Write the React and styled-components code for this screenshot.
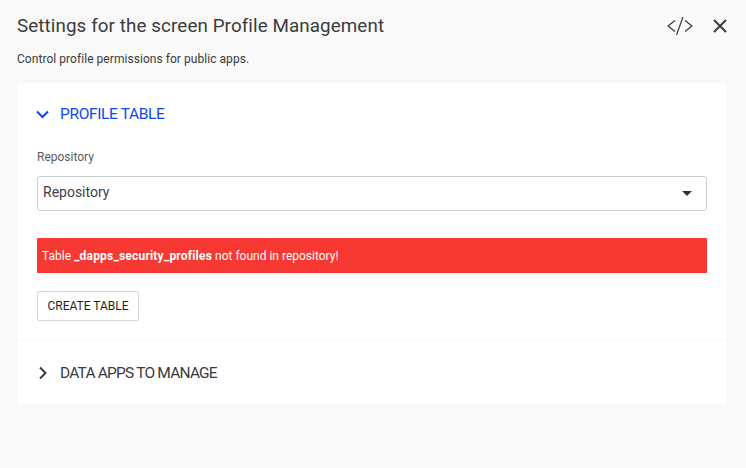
import React from 'react'
import styled, { createGlobalStyle } from 'styled-components'

const Global = createGlobalStyle`
  html, body { margin: 0; padding: 0; background: #f9f9f9; }
  body { font-family: Roboto, "Liberation Sans", sans-serif; }
`

const Page = styled.div`
  width: 746px;
  height: 468px;
  padding: 0 19px 0 17px;
  box-sizing: border-box;
  overflow: hidden;
  color: #3a3a3c;
`

const Header = styled.div`
  display: flex;
  align-items: center;
  justify-content: space-between;
  height: 52px;
`

const Title = styled.h1`
  margin: 0;
  font-size: 18.8px;
  font-weight: 400;
  letter-spacing: 0.1px;
  color: #3b3b3d;
`

const Actions = styled.div`
  display: flex;
  align-items: center;
  gap: 20px;
`

const Subtitle = styled.p`
  margin: 0 0 17px;
  height: 14px;
  line-height: 14px;
  font-size: 12px;
  letter-spacing: 0.05px;
  color: #3b3b3d;
`

const Card = styled.div`
  background: #fff;
  border-radius: 4px;
  box-shadow: 0 0 2px rgba(0, 0, 0, 0.04);
`

const Section = styled.section`
  border-bottom: ${({ $divider }) => ($divider ? '1px solid #f8f8f8' : 'none')};
  padding: ${({ $divider }) => ($divider ? '0 20px 19px 19px' : '0 20px 0 19px')};
`

const SectionHead = styled.div`
  display: flex;
  align-items: center;
  gap: 11px;
  height: ${({ $open }) => ($open ? '64px' : '63px')};
  padding-bottom: ${({ $open }) => ($open ? '2px' : '0')};
  box-sizing: border-box;
  color: ${({ $open }) => ($open ? '#0f47ef' : '#3b3b3d')};
  font-size: 15.5px;
  letter-spacing: ${({ $open }) => ($open ? '-0.35px' : '-0.8px')};
`

const Label = styled.div`
  font-size: 12px;
  line-height: 14px;
  color: #5c5c60;
  margin: 3px 0 12px 1px;
`

const Select = styled.div`
  display: flex;
  align-items: center;
  justify-content: space-between;
  height: 35px;
  box-sizing: border-box;
  padding: 0 14px 3px 5px;
  margin: 0 0 27px 1px;
  border: 1px solid #c6ced6;
  border-radius: 3px;
  font-size: 14px;
  color: #3f3f42;
`

const Caret = styled.span`
  width: 0;
  height: 0;
  margin-top: 3px;
  border-left: 5.5px solid transparent;
  border-right: 5.5px solid transparent;
  border-top: 5.5px solid #2f3237;
`

const Alert = styled.div`
  display: flex;
  align-items: center;
  gap: 3px;
  height: 35px;
  padding: 0 5px;
  margin: 0 0 18px 1px;
  background: #f73833;
  border-radius: 1px;
  color: #fff;
  font-size: 12px;
  b { font-weight: 700; letter-spacing: 0.2px; }
`

const Button = styled.button`
  display: block;
  height: 30px;
  width: 102px;
  margin-left: 1px;
  padding: 0;
  white-space: nowrap;
  background: #fff;
  border: 1px solid #d5d5d8;
  border-radius: 2px;
  font-family: inherit;
  font-size: 12px;
  color: #1f1f22;
`

const Glyph = styled.svg`
  display: block;
  flex: none;
`

const Chevron = ({ open }) => (
  <Glyph width="13" height="14" viewBox="0 0 13 14" fill="none" stroke="currentColor" strokeWidth="2">
    <path d={open ? 'M1 4.5 L6.5 10 L12 4.5' : 'M4 1.5 L9.5 7 L4 12.5'} />
  </Glyph>
)

export default function App() {
  return (
    <Page>
      <Global />
      <Header>
        <Title>Settings for the screen Profile Management</Title>
        <Actions>
          <Glyph width="26" height="20" viewBox="0 0 26 20" fill="none" stroke="#3b3b3d" strokeWidth="1.2">
            <path d="M8 4.5 L1 10 L8 15.5 M18 4.5 L25 10 L18 15.5 M16 1 L9.5 19" />
          </Glyph>
          <Glyph width="14" height="14" viewBox="0 0 14 14" fill="none" stroke="#3b3b3d" strokeWidth="2">
            <path d="M1 1 L13 13 M13 1 L1 13" />
          </Glyph>
        </Actions>
      </Header>
      <Subtitle>Control profile permissions for public apps.</Subtitle>
      <Card>
        <Section $divider>
          <SectionHead $open>
            <Chevron open />
            PROFILE TABLE
          </SectionHead>
          <Label>Repository</Label>
          <Select>
            Repository
            <Caret />
          </Select>
          <Alert>
            Table <b>_dapps_security_profiles</b> not found in repository!
          </Alert>
          <Button>CREATE TABLE</Button>
        </Section>
        <Section>
          <SectionHead>
            <Chevron />
            DATA APPS TO MANAGE
          </SectionHead>
        </Section>
      </Card>
    </Page>
  )
}
